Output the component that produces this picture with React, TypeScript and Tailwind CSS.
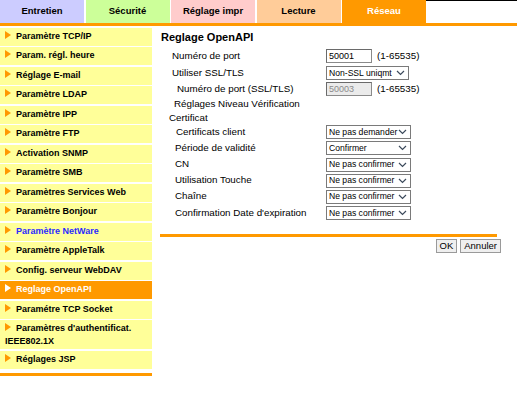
import React from "react";

const TABS = [
  { label: "Entretien", bg: "bg-[#ccccff]", text: "text-black" },
  { label: "Sécurité", bg: "bg-[#ccff99]", text: "text-black" },
  { label: "Réglage impr", bg: "bg-[#ffcccc]", text: "text-black" },
  { label: "Lecture", bg: "bg-[#ffcc99]", text: "text-black" },
  { label: "Réseau", bg: "bg-[#ff9900]", text: "text-white" },
];

const MENU = [
  "Paramètre TCP/IP",
  "Param. régl. heure",
  "Réglage E-mail",
  "Paramètre LDAP",
  "Paramètre IPP",
  "Paramètre FTP",
  "Activation SNMP",
  "Paramètre SMB",
  "Paramètres Services Web",
  "Paramètre Bonjour",
  "Paramètre NetWare",
  "Paramètre AppleTalk",
  "Config. serveur WebDAV",
  "Reglage OpenAPI",
  "Paramétre TCP Socket",
  "Paramètres d'authentificat. IEEE802.1X",
  "Réglages JSP",
];

function Arrow({ white }: { white?: boolean }) {
  return (
    <svg width="6" height="8" viewBox="0 0 6 8" className="mr-[5px] inline-block align-[0px]">
      <polygon points="0,0 6,4 0,8" fill={white ? "#ffffff" : "#ff9900"} />
    </svg>
  );
}

function Chevron() {
  return (
    <svg width="9" height="6" viewBox="0 0 9 6" className="shrink-0">
      <polyline points="1,1 4.5,4.5 8,1" fill="none" stroke="#3c4a5c" strokeWidth="1.2" />
    </svg>
  );
}

function Select({ value, w }: { value: string; w: string }) {
  return (
    <div
      className={`${w} flex h-[14px] items-center justify-between border border-[#7a7a7a] bg-white pl-[2px] pr-[3px] text-[8.6px] leading-none text-black`}
    >
      <span className="whitespace-nowrap">{value}</span>
      <Chevron />
    </div>
  );
}

function Input({ value, disabled }: { value: string; disabled?: boolean }) {
  return (
    <div
      className={`flex h-[14px] w-[46px] items-center border border-[#8a8a8a] border-t-[#6a6a6a] border-l-[#6a6a6a] pl-[2px] text-[9px] leading-none ${
        disabled ? "bg-[#ebebeb] text-[#8a8a8a]" : "bg-white text-black"
      }`}
    >
      {value}
    </div>
  );
}

function Row({
  label,
  indent = "pl-[12px]",
  h = "h-[16px]",
  children,
}: {
  label: string;
  indent?: string;
  h?: string;
  children?: React.ReactNode;
}) {
  return (
    <div className={`flex ${h} items-center`}>
      <div className={`w-[166px] shrink-0 ${indent}`}>{label}</div>
      <div className="flex items-center gap-[5px]">{children}</div>
    </div>
  );
}

export default function App() {
  return (
    <div className="relative h-[415px] w-[517px] overflow-hidden bg-white font-['Liberation_Sans',Arial,sans-serif] text-black">
      {/* tabs */}
      <div className="flex h-[23px]">
        {TABS.map((t, i) => (
          <div
            key={t.label}
            className={`${t.bg} ${t.text} ${i > 0 ? "ml-[1.5px]" : ""} flex w-[84px] items-center justify-center text-[9.5px] font-bold`}
          >
            {t.label}
          </div>
        ))}
        <div className="flex-1 border-t border-black" />
      </div>
      <div className="h-[3px] bg-[#ff9900]" />

      <div className="mt-[1.5px] flex">
        {/* sidebar */}
        <div className="w-[152px] shrink-0">
          <div className="flex flex-col gap-[1.5px]">
            {MENU.map((m, i) => {
              const active = m === "Reglage OpenAPI";
              const two = i === 15;
              return (
                <div
                  key={m}
                  className={`${active ? "bg-[#ff9900] text-white" : "bg-[#ffff99]"} ${
                    m === "Paramètre NetWare" ? "text-[#2a2aff]" : ""
                  } ${two ? "py-[1.5px] leading-[13px]" : "flex h-[18px] items-center"} pl-[5px] text-[9px] font-bold`}
                >
                  <span>
                    <Arrow white={active} />
                    {m}
                  </span>
                </div>
              );
            })}
          </div>
          <div className="mt-[4px] h-[3px] bg-[#ff9900]" />
        </div>

        {/* main */}
        <div className="ml-[8px] w-[337px] pt-[3px] text-[9.8px]">
          <div className="flex h-[14px] items-center pl-[1px] text-[11px] font-bold">Reglage OpenAPI</div>
          <div className="mt-[3px] flex flex-col">
            <Row label="Numéro de port" h="h-[17px]">
              <Input value="50001" />
              <span>(1-65535)</span>
            </Row>
            <Row label="Utiliser SSL/TLS" h="h-[17px]">
              <Select value="Non-SSL uniqmt" w="w-[83px]" />
            </Row>
            <Row label="Numéro de port (SSL/TLS)" indent="pl-[17px]" h="h-[15px]">
              <Input value="50003" disabled />
              <span>(1-65535)</span>
            </Row>
            <div className="w-[166px] pl-[9px] leading-[14px] [text-indent:5px]">
              Réglages Niveau Vérification Certificat
            </div>
            <Row label="Certificats client" indent="pl-[16px]" h="h-[15px]">
              <Select value="Ne pas demander" w="w-[85px]" />
            </Row>
            <Row label="Période de validité" indent="pl-[15px]" h="h-[17px]">
              <Select value="Confirmer" w="w-[85px]" />
            </Row>
            <Row label="CN" indent="pl-[15px]">
              <Select value="Ne pas confirmer" w="w-[85px]" />
            </Row>
            <Row label="Utilisation Touche" indent="pl-[15px]">
              <Select value="Ne pas confirmer" w="w-[85px]" />
            </Row>
            <Row label="Chaîne" indent="pl-[15px]">
              <Select value="Ne pas confirmer" w="w-[85px]" />
            </Row>
            <Row label="Confirmation Date d'expiration" indent="pl-[15px]" h="h-[17px]">
              <Select value="Ne pas confirmer" w="w-[85px]" />
            </Row>
          </div>
          <div className="mt-[12px] h-[3px] bg-[#ff9900]" />
          <div className="mt-[2px] flex justify-end gap-[3px]">
            <button className="h-[14px] border border-[#9a9a9a] bg-[#efefef] px-[3px] text-[9.5px] leading-none">
              OK
            </button>
            <button className="mr-[-4px] h-[14px] border border-[#9a9a9a] bg-[#efefef] px-[3px] text-[9.5px] leading-none">
              Annuler
            </button>
          </div>
        </div>
      </div>
    </div>
  );
}
